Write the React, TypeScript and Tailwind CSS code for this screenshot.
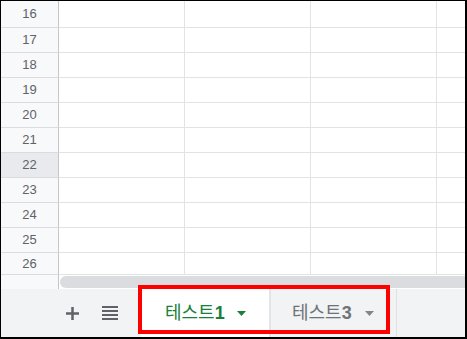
import React from "react";

const rows = [16, 17, 18, 19, 20, 21, 22, 23, 24, 25, 26];

const rowHeight = (n: number) => {
  if (n === 16) return "h-[27px]";
  if (n === 26) return "h-[22px]";
  return "h-[25px]";
};

const Caret = ({ color }: { color: string }) => (
  <svg width="9" height="5" viewBox="0 0 9 5">
    <polygon points="0,0 9,0 4.5,5" fill={color} />
  </svg>
);

const App: React.FC = () => {
  return (
    <div
      className="relative w-[467px] h-[339px] bg-white border-black border-l border-t border-r-2 border-b-2 flex flex-col overflow-hidden"
      style={{ fontFamily: '"Liberation Sans", Arial, sans-serif' }}
    >
      {/* Grid */}
      <div className="h-[274px] flex flex-col overflow-hidden">
        {rows.map((n) => (
          <div key={n} className={`flex shrink-0 ${rowHeight(n)}`}>
            <div
              className={`w-[58px] shrink-0 flex items-center justify-center border-r border-b border-r-[#c4c7c5] border-b-[#dadce0] text-[13px] text-[#5f6368] ${
                n === 22 ? "bg-[#e8eaed]" : "bg-[#f8f9fa]"
              }`}
            >
              {n}
            </div>
            <div className="w-[126px] shrink-0 border-r border-b border-[#e2e3e3]" />
            <div className="w-[126px] shrink-0 border-r border-b border-[#e2e3e3]" />
            <div className="w-[126px] shrink-0 border-r border-b border-[#e2e3e3]" />
            <div className="flex-1 border-b border-[#e2e3e3]" />
          </div>
        ))}
      </div>

      {/* Horizontal scrollbar */}
      <div className="h-[14px] flex shrink-0">
        <div className="w-[58px] shrink-0 bg-[#f8f9fa] border-r border-[#c4c7c5]" />
        <div className="flex-1 bg-white pl-[1px] pt-[1px]">
          <div className="h-[12px] w-full rounded-l-full bg-[#dadce0]" />
        </div>
      </div>

      {/* Sheet tabs bar */}
      <div className="flex-1 flex bg-[#f1f3f4] pl-[55px]">
        <div className="flex items-center gap-[6px]">
          <button className="w-[32px] h-[32px] flex items-center justify-center">
            <svg width="13" height="13" viewBox="0 0 13 13">
              <rect x="5.25" y="0" width="2.5" height="13" fill="#5f6368" />
              <rect x="0" y="5.25" width="13" height="2.5" fill="#5f6368" />
            </svg>
          </button>
          <button className="w-[32px] h-[32px] flex items-center justify-center">
            <svg width="16" height="14" viewBox="0 0 16 14">
              <rect x="0" y="0" width="16" height="2" fill="#5f6368" />
              <rect x="0" y="4" width="16" height="2" fill="#5f6368" />
              <rect x="0" y="8" width="16" height="2" fill="#5f6368" />
              <rect x="0" y="12" width="16" height="2" fill="#5f6368" />
            </svg>
          </button>
        </div>

        <div className="ml-[15px] flex h-full">
          <div className="w-[130px] h-full bg-white border-r-2 border-[#e3e5e8] flex items-center pl-[24px] gap-[12px]">
            <span
              className="text-[18px] text-[#188038]"
              style={{ fontFamily: '"Liberation Sans", "Noto Sans CJK KR", sans-serif' }}
            >
              테스트<span className="font-bold">1</span>
            </span>
            <Caret color="#188038" />
          </div>
          <div className="w-[126px] h-full border-r border-[#dfe1e5] flex items-center pl-[21px] gap-[13px]">
            <span
              className="text-[18px] text-[#6f7378]"
              style={{ fontFamily: '"Liberation Sans", "Noto Sans CJK KR", sans-serif' }}
            >
              테스트<span className="font-bold">3</span>
            </span>
            <Caret color="#80868b" />
          </div>
        </div>
      </div>

      {/* Red highlight annotation */}
      <div className="absolute left-[137px] top-[284px] w-[252px] h-[49px] border-4 border-[#ff0000] pointer-events-none" />
    </div>
  );
};

export default App;
